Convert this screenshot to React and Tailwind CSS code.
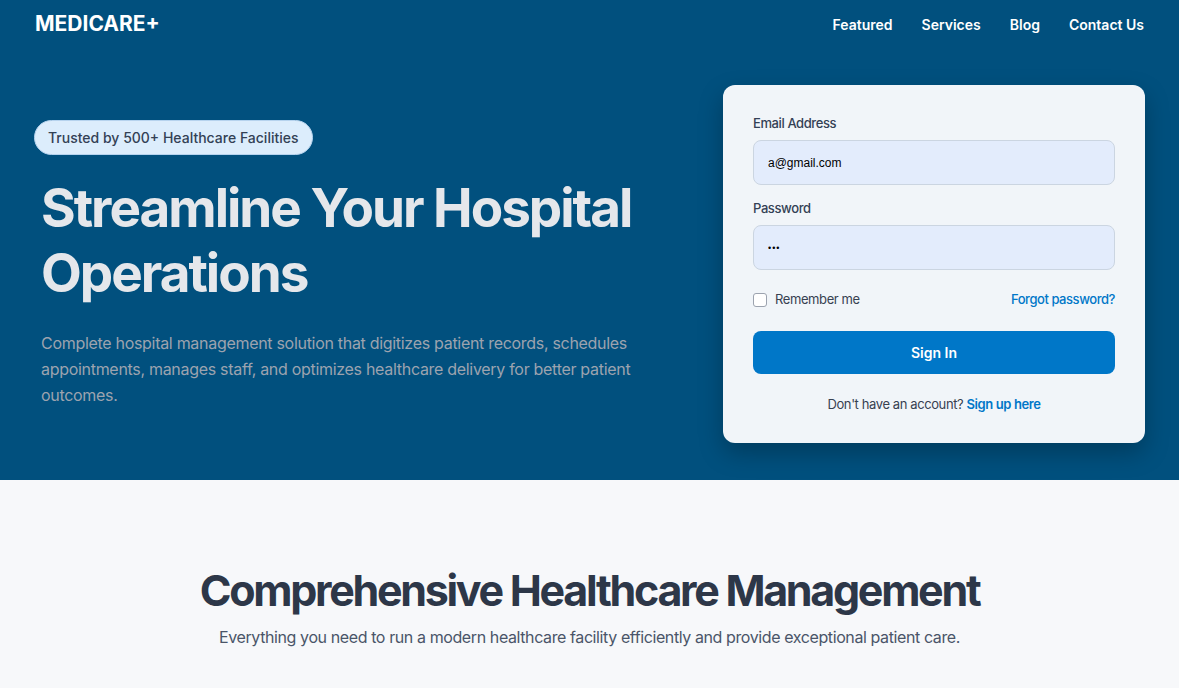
import { useState } from "react";

export default function App() {
  const [remember, setRemember] = useState(false);

  return (
    <div className="min-h-screen bg-[#f7f8fa] font-['Inter',sans-serif]">
      {/* Hero with nav */}
      <section className="bg-[#01507e]">
        <header className="flex h-12 items-center justify-between px-[35px]">
          <div className="text-[21px] font-bold text-white">MEDICARE+</div>
          <nav className="flex items-center gap-[29px] text-[14px] font-semibold text-white">
            <a href="#">Featured</a>
            <a href="#">Services</a>
            <a href="#">Blog</a>
            <a href="#">Contact Us</a>
          </nav>
        </header>

        <div className="flex items-center justify-between px-[34px] py-[37px]">
          <div className="w-[620px]">
            <span className="inline-block rounded-full border border-[#b6d3ee] bg-[#dcedfc] px-[13px] py-[6px] text-[14px] font-medium leading-[21px] text-[#334155]">
              Trusted by 500+ Healthcare Facilities
            </span>
            <h1 className="mt-[21px] pl-[7px] text-[53px] font-bold leading-[65px] tracking-[-2px] text-[#e5e7eb]">
              Streamline Your Hospital Operations
            </h1>
            <p className="mt-[24px] pl-[7px] text-[16px] leading-[26px] tracking-[-0.3px] text-[#9ca3af]">
              Complete hospital management solution that digitizes patient records, schedules appointments, manages staff, and optimizes healthcare delivery for better patient outcomes.
            </p>
          </div>

          <div className="w-[422px] rounded-xl bg-[#f1f5f9] px-[30px] pb-[29px] pt-[28px] shadow-[0_10px_25px_rgba(0,0,0,0.25)]">
            <label className="block text-[13px] font-medium leading-[20px] tracking-[-0.4px] text-[#334155]">Email Address</label>
            <input
              type="email"
              defaultValue="a@gmail.com"
              className="mt-[7px] block h-[45px] w-full rounded-lg border border-[#cbd5e1] bg-[#e3ecfc] px-[14px] font-['Liberation_Sans',sans-serif] text-[12px] text-black outline-none"
            />
            <label className="mt-[13px] block text-[13px] font-medium leading-[20px] tracking-[-0.4px] text-[#334155]">Password</label>
            <input
              type="password"
              defaultValue="abc"
              className="mt-[7px] block h-[45px] w-full rounded-lg border border-[#cbd5e1] bg-[#e3ecfc] px-[14px] font-['Liberation_Sans',sans-serif] text-[9px] tracking-[1px] text-black outline-none"
            />
            <div className="mt-[20px] flex h-[20px] items-center justify-between text-[13px] tracking-[-0.4px]">
              <label className="flex items-center gap-[8px] text-[#374151]">
                <input
                  type="checkbox"
                  checked={remember}
                  onChange={(e) => setRemember(e.target.checked)}
                  className="h-[14px] w-[14px] appearance-none rounded-[3px] border border-[#9ca3af] bg-white"
                />
                Remember me
              </label>
              <a href="#" className="font-medium tracking-[-0.45px] text-[#0077c8]">Forgot password?</a>
            </div>
            <button className="mt-[21px] block h-[43px] w-full rounded-lg bg-[#0077c8] text-[14px] font-semibold text-white">
              Sign In
            </button>
            <p className="mt-[20px] text-center text-[13px] leading-[20px] tracking-[-0.4px] text-[#374151]">
              Don't have an account?{" "}
              <a href="#" className="font-semibold text-[#0077c8]">Sign up here</a>
            </p>
          </div>
        </div>
      </section>

      {/* Features intro */}
      <section className="pt-[84px] text-center">
        <h2 className="text-[43px] font-bold leading-[52px] tracking-[-2.3px] text-[#2d3748]">Comprehensive Healthcare Management</h2>
        <p className="mt-[9px] text-[16px] leading-[24px] tracking-[-0.4px] text-[#4a5568]">
          Everything you need to run a modern healthcare facility efficiently and provide exceptional patient care.
        </p>
      </section>
    </div>
  );
}
